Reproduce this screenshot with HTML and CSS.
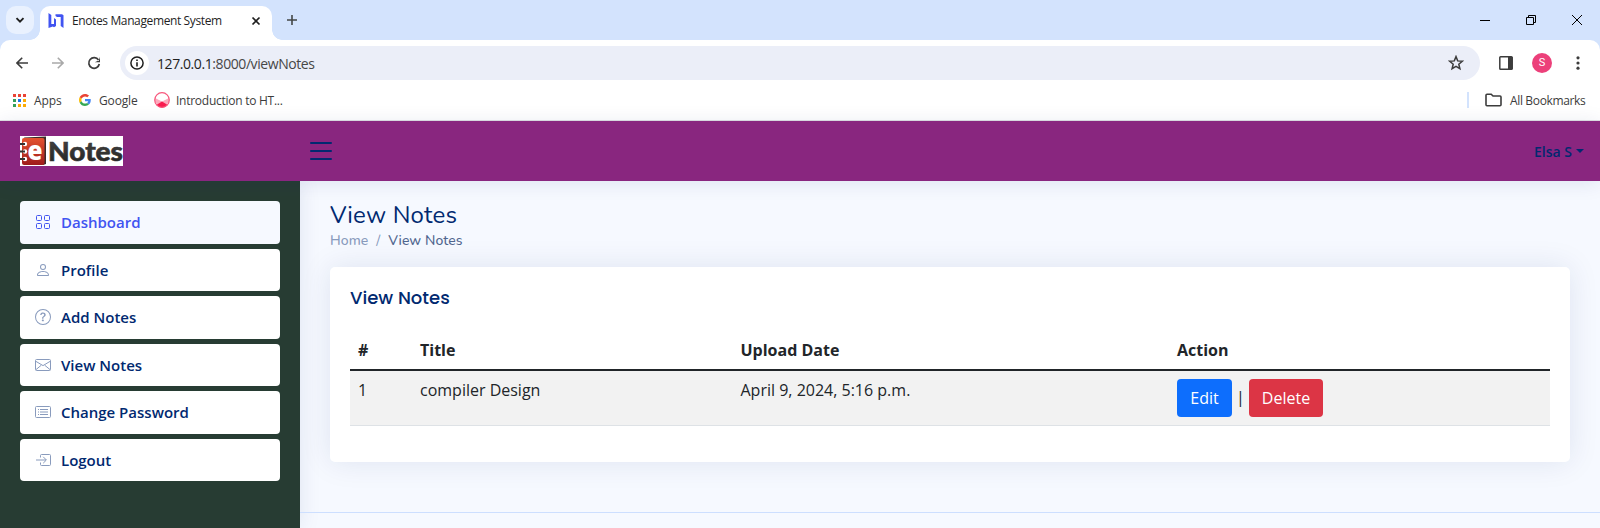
FILE: index.html
```html
<!DOCTYPE html>
<html lang="en">
<head>
<meta charset="utf-8">
<title>Enotes Management System</title>
<link rel="stylesheet" href="styles.css">
</head>
<body>
<div class="browser">
  <div class="tabstrip">
    <div class="tab-search"><svg width="10" height="10" viewBox="0 0 10 10"><path d="M1.5 3.2 5 6.7l3.500-3.500" fill="none" stroke="#1f1f1f" stroke-width="1.900"/></svg></div>
    <div class="tab">
      <svg width="16" height="16" viewBox="0 0 16 16" fill="#4154f1"><path d="M.5 0 3.300 2v9H6V5l2 1.500V13l-2 1.200-1.200-.7L.5 15zM7.500 1.200H14l1.500 1V15l-2.800-2V4H9L7.500 3z"/></svg>
      <span class="tab-title">Enotes Management System</span>
      <svg class="tab-close" width="10" height="10" viewBox="0 0 10 10"><path d="M1.500 1.500l7 7M8.500 1.500l-7 7" stroke="#1f1f1f" stroke-width="1.700"/></svg>
    </div>
    <svg class="tab-new" width="12" height="12" viewBox="0 0 12 12"><path d="M6 1v10M1 6h10" stroke="#444746" stroke-width="1.600"/></svg>
    <div class="window-controls">
      <svg width="10" height="10" viewBox="0 0 10 10"><path d="M0 5.500h10" stroke="#000"/></svg>
      <svg width="10" height="10" viewBox="0 0 10 10" fill="none" stroke="#000"><path d="M.5 2.500h7v7h-7zM2.500 2.500v-2h7v7h-2"/></svg>
      <svg width="10" height="10" viewBox="0 0 10 10"><path d="M0 0l10 10M10 0L0 10" stroke="#000"/></svg>
    </div>
  </div>
  <div class="toolbar">
    <svg width="12" height="12" viewBox="0 0 12 12" fill="none" stroke="#3c3c3c" stroke-width="1.600"><path d="M12 6H1.200M6.200.8 1 6l5.200 5.200"/></svg>
    <svg width="12" height="12" viewBox="0 0 12 12" fill="none" stroke="#a9a9a9" stroke-width="1.600"><path d="M0 6h10.800M5.800.8 11 6l-5.200 5.200"/></svg>
    <svg width="14" height="14" viewBox="0 0 14 14"><path d="M11.500 4A5.300 5.300 0 1 0 12.300 8" fill="none" stroke="#3c3c3c" stroke-width="1.700"/><path d="M13 .8v5.400H7.800L10.500 5h1.200z" fill="#3c3c3c"/></svg>
    <div class="omnibox">
      <span class="site-info"><svg width="14" height="14" viewBox="0 0 14 14"><circle cx="7" cy="7" r="6.100" fill="none" stroke="#1f1f1f" stroke-width="1.500"/><path d="M7 6.200v4.300M7 3.500v1.600" stroke="#1f1f1f" stroke-width="1.600"/></svg></span>
      <span class="url"><b>127.0.0.1</b>:8000/viewNotes</span>
      <svg class="star" width="16" height="16" viewBox="0 0 16 16"><path d="M8 1.600l1.700 4.300 4.600.3-3.500 3 1.100 4.500L8 11.300l-3.900 2.400 1.100-4.500-3.500-3 4.600-.3z" fill="none" stroke="#3c3c3c" stroke-width="1.500"/></svg>
    </div>
    <svg class="panel-icon" width="14" height="14" viewBox="0 0 14 14"><rect x=".8" y=".8" width="12.400" height="12.400" rx=".8" fill="none" stroke="#3c3c3c" stroke-width="1.500"/><path d="M9 1h4.500v12H9z" fill="#3c3c3c"/></svg>
    <span class="avatar">S</span>
    <svg class="menu-icon" width="4" height="14" viewBox="0 0 4 14" fill="#3c3c3c"><circle cx="2" cy="1.800" r="1.600"/><circle cx="2" cy="7" r="1.600"/><circle cx="2" cy="12.200" r="1.600"/></svg>
  </div>
  <div class="bookmarks">
    <svg width="13" height="13" viewBox="0 0 13 13"><g fill="#ea4335"><path d="M0 0h3v3H0zM5 0h3v3H5zM10 0h3v3h-3z"/></g><path d="M0 5h3v3H0zM0 10h3v3H0z" fill="#34a05a"/><path d="M5 5h3v3H5z" fill="#1a73e8"/><path d="M10 5h3v3h-3zM5 10h3v3H5zM10 10h3v3h-3z" fill="#fbab05"/></svg>
    <span class="bm-apps">Apps</span>
    <svg class="bm-g" width="12" height="12" viewBox="0 0 48 48"><path fill="#EA4335" d="M24 9.500c3.540 0 6.710 1.220 9.210 3.600l6.850-6.850C35.900 2.380 30.470 0 24 0 14.620 0 6.510 5.380 2.560 13.220l7.980 6.190C12.430 13.720 17.740 9.500 24 9.500z"/><path fill="#4285F4" d="M46.980 24.550c0-1.570-.15-3.090-.38-4.550H24v9.020h12.940c-.58 2.960-2.260 5.480-4.780 7.180l7.730 6c4.510-4.180 7.090-10.360 7.090-17.650z"/><path fill="#FBBC05" d="M10.530 28.590c-.48-1.450-.76-2.990-.76-4.590s.27-3.140.76-4.590l-7.980-6.190C.92 16.460 0 20.120 0 24c0 3.880.92 7.540 2.560 10.780l7.970-6.190z"/><path fill="#34A853" d="M24 48c6.480 0 11.930-2.130 15.890-5.810l-7.730-6c-2.150 1.450-4.920 2.300-8.160 2.300-6.260 0-11.570-4.220-13.470-9.910l-7.980 6.190C6.510 42.620 14.620 48 24 48z"/></svg>
    <span class="bm-google">Google</span>
    <svg class="bm-i" width="16" height="16" viewBox="0 0 16 16"><circle cx="8" cy="8" r="7.300" fill="#fff"/><path d="M1 6l7 3.500L15 6v4l-3 3H4l-3-3z" fill="#fda9bc"/><path d="M2.300 13 8 9.500l5.700 3.500A7.500 7.500 0 0 1 2.300 13z" fill="#f91b4e"/><circle cx="8" cy="8" r="7.300" fill="none" stroke="#f7577c" stroke-width="1.200"/></svg>
    <span class="bm-intro">Introduction to HT...</span>
    <span class="bm-sep"></span>
    <svg class="bm-folder" width="17" height="14" viewBox="0 0 17 14"><path d="M1 2.200Q1 1.200 2 1.200h4.200L8 3h7q1 0 1 1v7.800q0 1-1 1H2q-1 0-1-1z" fill="none" stroke="#3c3c3c" stroke-width="1.600"/></svg>
    <span class="bm-all">All Bookmarks</span>
  </div>
</div>
<header class="header">
  <div class="logo">
    <svg width="103" height="30" viewBox="0 0 103 30"><defs><linearGradient id="red" x1="0" y1="0" x2="0" y2="1"><stop offset="0" stop-color="#e4532f"/><stop offset="1" stop-color="#9e1b1b"/></linearGradient><linearGradient id="ink" x1="0" y1="0" x2="0" y2="1"><stop offset="0" stop-color="#484848"/><stop offset="1" stop-color="#202020"/></linearGradient></defs><path fill="#fff" d="M0 0h103v30H0z"/><path d="M4 1.500 26 .5V28l-3 1z" fill="#3b2a28"/><rect x="2" y="2" width="22.500" height="27" rx="2" fill="url(#red)"/><g fill="#fff"><circle cx="5" cy="8" r="2.200"/><circle cx="5" cy="15.500" r="2.200"/><circle cx="5" cy="23" r="2.200"/></g><path d="M0 8h5M0 15.500h5M0 23h5" stroke="#333" stroke-width="2"/><text class="logo-e" x="7.500" y="24" textLength="15" lengthAdjust="spacingAndGlyphs">e</text><text class="logo-notes" x="28" y="25" textLength="75" lengthAdjust="spacingAndGlyphs" fill="url(#ink)">Notes</text></svg>
  </div>
  <svg class="toggle" width="32" height="32" viewBox="0 0 16 16"><path d="M3 4h10M3 8h10M3 12h10" stroke="#012970" stroke-width="1" stroke-linecap="round"/></svg>
  <div class="user">Elsa S<i class="caret"></i></div>
</header>
<div class="page">
  <nav class="sidebar">
    <a class="nav-link active"><svg viewBox="0 0 16 16" class="ico line"><rect x="1.500" y="1.500" width="5" height="5" rx="1"/><rect x="9.500" y="1.500" width="5" height="5" rx="1"/><rect x="1.500" y="9.500" width="5" height="5" rx="1"/><rect x="9.500" y="9.500" width="5" height="5" rx="1"/></svg>Dashboard</a>
    <a class="nav-link"><svg viewBox="0 0 16 16" class="ico"><path d="M8 8a3 3 0 1 0 0-6 3 3 0 0 0 0 6zm2-3a2 2 0 1 1-4 0 2 2 0 0 1 4 0zm4 8c0 1-1 1-1 1H3s-1 0-1-1 1-4 6-4 6 3 6 4zm-1-.004c-.001-.246-.154-.986-.832-1.664C11.516 10.680 10.289 10 8 10c-2.290 0-3.516.68-4.168 1.332-.678.678-.83 1.418-.832 1.664h10z"/></svg>Profile</a>
    <a class="nav-link"><svg viewBox="0 0 16 16" class="ico"><path d="M8 15A7 7 0 1 1 8 1a7 7 0 0 1 0 14zm0 1A8 8 0 1 0 8 0a8 8 0 0 0 0 16z"/><path d="M5.255 5.786a.237.237 0 0 0 .241.247h.825c.138 0 .248-.113.266-.25.090-.656.540-1.134 1.342-1.134.686 0 1.314.343 1.314 1.168 0 .635-.374.927-.965 1.371-.673.489-1.206 1.060-1.168 1.987l.003.217a.25.25 0 0 0 .25.246h.811a.25.25 0 0 0 .25-.25v-.105c0-.718.273-.927 1.010-1.486.609-.463 1.244-.977 1.244-2.056 0-1.511-1.276-2.241-2.673-2.241-1.267 0-2.655.590-2.750 2.286zm1.557 5.763c0 .533.425.927 1.010.927.609 0 1.028-.394 1.028-.927 0-.552-.420-.940-1.029-.940-.584 0-1.009.388-1.009.940z"/></svg>Add Notes</a>
    <a class="nav-link"><svg viewBox="0 0 16 16" class="ico line"><rect x=".5" y="2.500" width="15" height="11" rx="1"/><path d="M.8 4.300 8 8.600l7.200-4.300M.9 12.700l5.400-4.500M15.100 12.700 9.700 8.200"/></svg>View Notes</a>
    <a class="nav-link"><svg viewBox="0 0 16 16" class="ico line"><rect x=".5" y="2.500" width="15" height="11" rx="1"/><path d="M5 5.500h8M5 8h8M5 10.500h8M3 5.500h1M3 8h1M3 10.500h1"/></svg>Change Password</a>
    <a class="nav-link"><svg viewBox="0 0 16 16" class="ico line"><path d="M5.500 5.500v-2q0-1 1-1h8q1 0 1 1v9q0 1-1 1h-8q-1 0-1-1v-2M1 8h10M8.200 4.800 11.400 8l-3.200 3.200"/></svg>Logout</a>
  </nav>
  <main class="main">
    <h1>View Notes</h1>
    <div class="breadcrumb"><span class="bc-home">Home</span><span class="bc-slash">/</span><span class="bc-active">View Notes</span></div>
    <section class="card">
      <h5>View Notes</h5>
      <table>
        <colgroup><col class="c1"><col class="c2"><col class="c3"><col></colgroup>
        <thead><tr><th>#</th><th>Title</th><th>Upload Date</th><th>Action</th></tr></thead>
        <tbody><tr><td>1</td><td>compiler Design</td><td>April 9, 2024, 5:16 p.m.</td><td class="action-cell"><div class="actions"><a class="btn edit">Edit</a><span>|</span><a class="btn delete">Delete</a></div></td></tr></tbody>
      </table>
    </section>
    <footer></footer>
  </main>
</div>
</body>
</html>
```

FILE: styles.css
```css
* { box-sizing: border-box; }
body { margin: 0; width: 1600px; height: 528px; overflow: hidden; display: flex; flex-direction: column; font-family: "Open Sans", sans-serif; background: #f6f9ff; color: #212529; }
svg { display: block; flex: none; }

.browser { height: 121px; flex: none; background: #d3e3fd; border-bottom: 1px solid #e0dfe3; font-size: 12px; color: #3c3c3c; }
.tabstrip { height: 40px; display: flex; align-items: center; padding-left: 6px; }
.tab-search { width: 28px; height: 28px; border-radius: 10px; background: #e9f1fe; display: grid; place-items: center; }
.tab { position: relative; margin-left: 6px; align-self: flex-end; width: 232px; height: 34px; padding: 0 15px 5px 8px; border-radius: 10px 10px 0 0; background: #fff; display: flex; align-items: center; color: #1f1f1f; }
.tab::before, .tab::after { content: ""; position: absolute; bottom: 0; width: 10px; height: 10px; }
.tab::before { left: -10px; background: radial-gradient(circle at 0 0, transparent 9.5px, #fff 10px); }
.tab::after { right: -10px; background: radial-gradient(circle at 100% 0, transparent 9.5px, #fff 10px); }
.tab-title { margin-left: 8px; letter-spacing: -.38px; white-space: nowrap; }
.tab-close { margin-left: auto; margin-right: -4px; }
.tab-new { margin-left: 14px; }
.window-controls { margin-left: auto; display: flex; gap: 36px; padding-right: 18px; }
.toolbar { height: 46px; background: #fff; border-radius: 10px 10px 0 0; display: flex; align-items: center; padding: 0 20px 0 16px; }
.toolbar > svg:nth-child(2) { margin-left: 24px; }
.toolbar > svg:nth-child(3) { margin-left: 23px; }
.omnibox { margin-left: 19px; width: 1360px; height: 34px; border-radius: 17px; background: #ebeef8; display: flex; align-items: center; padding: 0 16px 0 5px; }
.site-info { width: 24px; height: 24px; border-radius: 50%; background: #fff; display: grid; place-items: center; }
.url { margin-left: 8px; font-size: 14px; color: #474747; letter-spacing: -.42px; }
.url b { font-weight: 400; color: #1f1f1f; }
.star { margin-left: auto; }
.panel-icon { margin-left: 19px; }
.avatar { margin-left: 19px; width: 20px; height: 20px; border-radius: 50%; background: #ec407a; color: #fff; font: 11px/20px Roboto, sans-serif; text-align: center; }
.menu-icon { margin-left: auto; }
.bookmarks { height: 34px; background: #fff; display: flex; align-items: center; padding: 0 15px 6px 13px; }
.bookmarks span { white-space: nowrap; }
.bm-apps { width: 27px; margin-left: 8px; letter-spacing: -.1px; }
.bm-g { margin-left: 18px; }
.bm-google { margin-left: 8px; width: 39px; letter-spacing: -.15px; }
.bm-i { margin-left: 16px; }
.bm-intro { margin-left: 6px; letter-spacing: -.26px; }
.bm-sep { margin-left: auto; width: 2px; height: 16px; background: #d3e3fd; }
.bm-folder { margin-left: 16px; }
.bm-all { margin-left: 8px; width: 75px; letter-spacing: -.35px; }

.header { height: 60px; flex: none; background: #89267f; display: flex; align-items: center; padding: 0 16px 0 20px; box-shadow: 0 2px 20px rgba(1, 41, 112, .1); position: relative; }
.logo svg { overflow: visible; }
.logo-e { font: 800 26px/1 "Open Sans", sans-serif; fill: #fff; }
.logo-notes { font: 900 26px/1 Lato, sans-serif; stroke: #333; stroke-width: .6px; }
.toggle { margin-left: 182px; }
.user { margin-left: auto; display: flex; align-items: center; font-size: 14px; font-weight: 600; color: #012970; }
.caret { margin-left: 4px; border: 4px solid transparent; border-top-color: #012970; border-bottom: 0; }

.page { flex: 1; display: flex; }
.sidebar { width: 300px; padding: 20px; background: #273c33; display: flex; flex-direction: column; gap: 5px; box-shadow: 0 0 20px rgba(1, 41, 112, .1); }
.nav-link { height: 42.500px; flex: none; border-radius: 4px; background: #fff; padding: 0 15px; display: flex; align-items: center; font-size: 15px; font-weight: 600; color: #012970; }
.nav-link.active { background: #f6f9ff; color: #4154f1; }
.ico { width: 16px; height: 16px; margin-right: 10px; fill: #899bbd; }
.line { fill: none; stroke: #899bbd; }
.active .ico { stroke: #4154f1; }

.main { flex: 1; display: flex; flex-direction: column; }
h1 { margin: 20px 30px 0; font: 400 24px/29px "Nunito", "Open Sans", sans-serif; letter-spacing: .2px; color: #012970; }
.breadcrumb { margin: 0 30px; display: flex; font: 500 14px/21px "Nunito", "Open Sans", sans-serif; letter-spacing: .06px; color: #899bbd; }
.bc-slash { margin: 0 8px; font-weight: 400; }
.bc-active { color: #51678f; }
.card { margin: 16px 30px 0; height: 195px; flex: none; padding: 20px; background: #fff; border-radius: 5px; box-shadow: 0 0 30px rgba(1, 41, 112, .1); }
h5 { margin: 0 0 20px; font: 500 18px/22px "Poppins", Inter, sans-serif; color: #012970; }
table { width: 1200px; border-collapse: collapse; table-layout: fixed; font-size: 16px; line-height: 24px; }
.c1 { width: 62px; } .c2 { width: 320.500px; } .c3 { width: 436.500px; }
th { padding: 9px 8px 7px; height: 41px; text-align: left; font-weight: 700; border-bottom: 2px solid #212529; }
td { padding: 7px 8px 9px; vertical-align: top; background: #f2f2f2; border-bottom: 1px solid #dee2e6; }
td.action-cell { padding: 8px; }
.actions { display: flex; align-items: center; }
.actions span { width: 17px; margin-top: -2px; text-align: center; }
.btn { height: 38px; border-radius: 4px; color: #fff; line-height: 38px; text-align: center; }
.edit { width: 55px; background: #0d6efd; }
.delete { width: 74px; background: #dc3545; }
footer { margin-top: 50px; border-top: 1px solid #cddfff; }
```
